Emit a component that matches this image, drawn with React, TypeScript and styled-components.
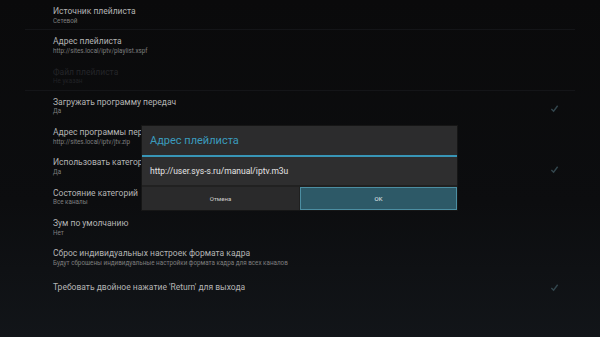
import React from "react";
import styled, { createGlobalStyle } from "styled-components";

const Global = createGlobalStyle`
  html, body { margin: 0; padding: 0; }
  body {
    width: 600px; height: 337px; overflow: hidden;
    background: linear-gradient(180deg, #0a0a0b 0%, #0c0d0f 60%, #121519 100%);
    font-family: Roboto, "Noto Sans", sans-serif;
  }
`;

const Screen = styled.div`
  position: relative;
  width: 600px;
  height: 337px;
`;

const List = styled.div`
  display: flex;
  flex-direction: column;
  padding: 0 25px;
`;

const Row = styled.div<{ $single?: boolean; $divider?: boolean }>`
  height: 30.3px;
  box-sizing: border-box;
  display: flex;
  align-items: ${(p) => (p.$single ? "center" : "flex-start")};
  padding: ${(p) => (p.$single ? "0" : "6px")} 16px 0 28px;
  border-bottom: 1px solid ${(p) => (p.$divider ? "#141518" : "transparent")};
`;

const Texts = styled.div`
  flex: 1;
  display: flex;
  flex-direction: column;
  min-width: 0;
`;

const Title = styled.div<{ $disabled?: boolean }>`
  font-size: 8.5px;
  line-height: 10px;
  color: ${(p) => (p.$disabled ? "#242529" : "#b4b4b4")};
  white-space: nowrap;
`;

const Sub = styled.div<{ $disabled?: boolean }>`
  font-size: 6.3px;
  line-height: 7px;
  margin-top: 1.5px;
  color: ${(p) => (p.$disabled ? "#212226" : "#7e7e7e")};
  white-space: nowrap;
`;

const Check = styled.svg`
  width: 9px;
  height: 9px;
  flex: none;
  align-self: center;
`;

const Dialog = styled.div`
  position: absolute;
  left: 142px;
  top: 126px;
  width: 315px;
  display: flex;
  flex-direction: column;
  background: #2c2c2d;
  box-shadow: 0 0 0 1px #161616;
`;

const DialogTitle = styled.div`
  height: 29px;
  display: flex;
  align-items: center;
  padding-left: 8px;
  font-size: 11px;
  color: #3b9bbd;
  border-bottom: 2px solid #3895b6;
`;

const Input = styled.div`
  height: 28px;
  display: flex;
  align-items: center;
  padding-left: 8px;
  font-size: 8.5px;
  color: #e4e4e4;
  background: #2e2e2f;
  border-bottom: 2px solid #212121;
`;

const Buttons = styled.div`
  display: grid;
  grid-template-columns: 157px 1fr;
  gap: 1px;
  height: 23px;
  background: #202020;
`;

const Button = styled.div<{ $active?: boolean }>`
  display: flex;
  align-items: center;
  justify-content: center;
  font-size: 6px;
  color: ${(p) => (p.$active ? "#e8eef0" : "#cfcfcf")};
  background: ${(p) => (p.$active ? "#2d5967" : "#2a2a2b")};
  box-shadow: ${(p) => (p.$active ? "inset 0 0 0 1px #4c8ea2" : "none")};
`;

const CheckMark = () => (
  <Check viewBox="0 0 10 10">
    <path d="M1.5 5.5 L4 8 L8.5 2" fill="none" stroke="#33464d" strokeWidth="1.6" />
  </Check>
);

type Item = {
  title: string;
  sub?: string;
  check?: boolean;
  disabled?: boolean;
  divider?: boolean;
};

const items: Item[] = [
  { title: "Источник плейлиста", sub: "Сетевой", divider: true },
  { title: "Адрес плейлиста", sub: "http://sites.local/iptv/playlist.xspf" },
  { title: "Файл плейлиста", sub: "Не указан", disabled: true, divider: true },
  { title: "Загружать программу передач", sub: "Да", check: true },
  { title: "Адрес программы передач", sub: "http://sites.local/iptv/jtv.zip" },
  { title: "Использовать категории", sub: "Да", check: true },
  { title: "Состояние категорий", sub: "Все каналы" },
  { title: "Зум по умолчанию", sub: "Нет" },
  {
    title: "Сброс индивидуальных настроек формата кадра",
    sub: "Будут сброшены индивидуальные настройки формата кадра для всех каналов",
  },
  { title: "Требовать двойное нажатие 'Return' для выхода", check: true },
];

export default function App() {
  return (
    <Screen>
      <Global />
      <List>
        {items.map((it) => (
          <Row key={it.title} $single={!it.sub} $divider={it.divider}>
            <Texts>
              <Title $disabled={it.disabled}>{it.title}</Title>
              {it.sub && <Sub $disabled={it.disabled}>{it.sub}</Sub>}
            </Texts>
            {it.check && <CheckMark />}
          </Row>
        ))}
      </List>
      <Dialog>
        <DialogTitle>Адрес плейлиста</DialogTitle>
        <Input>http://user.sys-s.ru/manual/iptv.m3u</Input>
        <Buttons>
          <Button>Отмена</Button>
          <Button $active>OK</Button>
        </Buttons>
      </Dialog>
    </Screen>
  );
}
